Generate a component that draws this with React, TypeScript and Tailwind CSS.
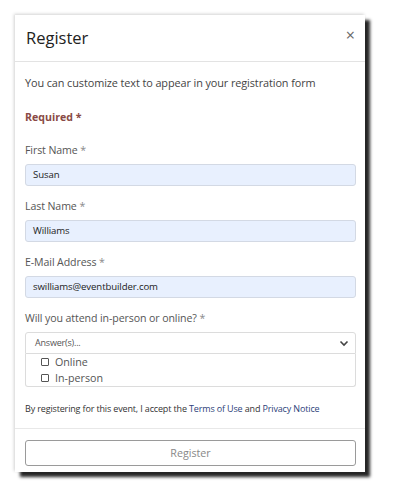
import React from "react";

const font = { fontFamily: '"Open Sans", "Noto Sans", sans-serif' };

function Label({ children }: { children: React.ReactNode }) {
  return (
    <div className="h-[18px] leading-[18px] text-[10.6px] tracking-[-0.1px] text-[#555]">
      {children} <span className="text-[#888]">*</span>
    </div>
  );
}

function Input({ value }: { value: string }) {
  return (
    <div className="mt-[5px] h-[22px] w-[331px] rounded-[3px] border border-[#d3d9e4] bg-[#e8f0fe] pl-[7px] text-[9.6px] tracking-[-0.1px] leading-[20px] text-[#222]">
      {value}
    </div>
  );
}

export default function App() {
  return (
    <div className="relative h-[501px] w-[394px] bg-white pl-[15px] pt-[15px]" style={font}>
      <div className="flex h-[457px] w-[350px] flex-col bg-white shadow-[5px_5px_3px_rgba(0,0,0,0.85),_-1px_-1px_3px_rgba(0,0,0,0.18)]">
        <div className="flex h-[47px] items-center justify-between border-b border-[#e3e3e3] pl-[11px] pr-[10px]">
          <div className="text-[16.5px] leading-[24px] text-[#222]">Register</div>
          <div className="-mt-[6px] text-[16px] leading-[18px] text-[#666]">×</div>
        </div>
        <div className="flex flex-col pl-[10px]">
          <div className="mt-[12px] h-[18px] leading-[18px] text-[10.9px] tracking-[-0.1px] text-[#444]">
            You can customize text to appear in your registration form
          </div>
          <div className="mt-[16px] h-[18px] leading-[18px] text-[10.6px] font-bold text-[#8a4a45]">
            Required *
          </div>
          <div className="mt-[15px]">
            <Label>First Name</Label>
            <Input value="Susan" />
          </div>
          <div className="mt-[11px]">
            <Label>Last Name</Label>
            <Input value="Williams" />
          </div>
          <div className="mt-[11px]">
            <Label>E-Mail Address</Label>
            <Input value="swilliams@eventbuilder.com" />
          </div>
          <div className="mt-[11px]">
            <Label>Will you attend in-person or online?</Label>
            <div className="mt-[5px] flex h-[22px] w-[331px] items-center justify-between rounded-t-[3px] border border-[#dcdcdc] pl-[9px] pr-[6px] text-[9px] tracking-[-0.2px] text-[#555]">
              <span>Answer(s)...</span>
              <svg width="10" height="7" viewBox="0 0 10 7">
                <polyline points="1.5,1.5 5,5 8.5,1.5" fill="none" stroke="#444" strokeWidth="1.6" />
              </svg>
            </div>
            <div className="flex h-[33px] w-[331px] flex-col justify-center rounded-b-[3px] border border-t-0 border-[#dcdcdc] pl-[15px] text-[10.7px] text-[#555]">
              <div className="flex h-[16px] items-center gap-[6px]">
                <span className="inline-block h-[8px] w-[8px] rounded-[1px] border border-[#555]" />
                <span>Online</span>
              </div>
              <div className="flex h-[16px] items-center gap-[6px]">
                <span className="inline-block h-[8px] w-[8px] rounded-[1px] border border-[#555]" />
                <span>In-person</span>
              </div>
            </div>
          </div>
          <div className="mt-[14px] h-[16px] whitespace-nowrap leading-[16px] text-[9px] tracking-[-0.15px] text-[#333]">
            By registering for this event, I accept the <span className="text-[#2d3f7a]">Terms of Use</span> and{" "}
            <span className="text-[#2d3f7a]">Privacy Notice</span>
          </div>
        </div>
        <div className="mt-[11px] border-t border-[#e8e8e8] px-[10px] pt-[11px]">
          <div className="flex h-[26px] w-[331px] items-center justify-center rounded-[3px] border border-[#9a9a9a] text-[10.7px] text-[#888]">
            Register
          </div>
        </div>
      </div>
    </div>
  );
}
